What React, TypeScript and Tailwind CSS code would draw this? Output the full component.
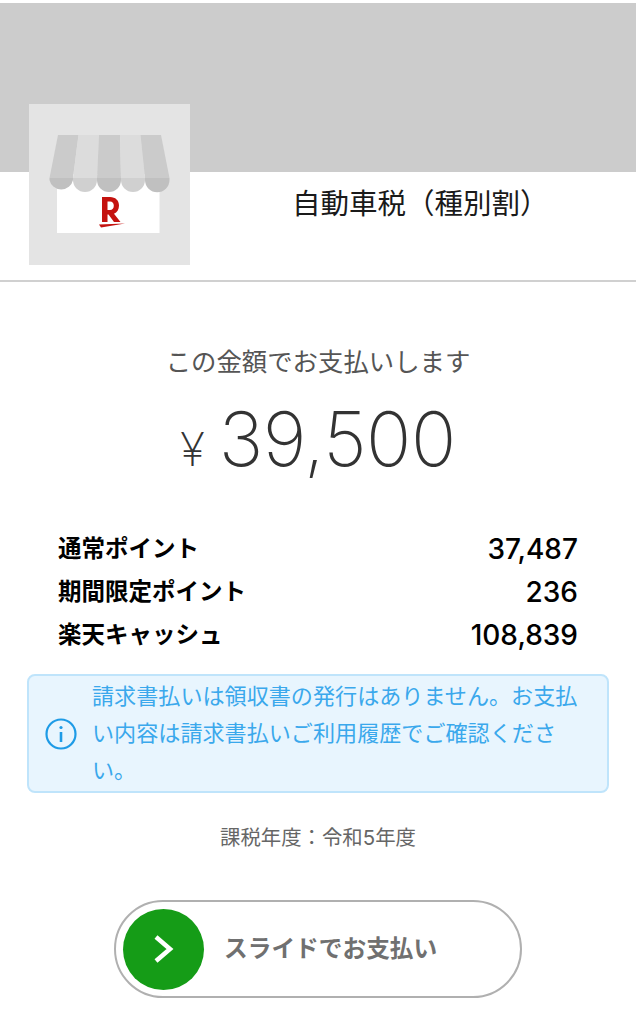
import React from 'react';

const JP = { fontFamily: 'Inter, "Noto Sans CJK JP", sans-serif' };

const points = [
  { label: '通常ポイント', value: '37,487' },
  { label: '期間限定ポイント', value: '236' },
  { label: '楽天キャッシュ', value: '108,839' },
];

const ShopIcon = () => (
  <svg viewBox="0 0 161 161" className="w-[161px] h-[161px] block">
    <rect x="28" y="70" width="102.5" height="59" fill="#ffffff" />
    {/* awning stripes */}
    <path d="M29 31 H49.5 L44 74 H20.5 Z" fill="#cbcbcb" />
    <path d="M49.5 31 H70 L68 74 H44 Z" fill="#dcdcdc" />
    <path d="M70 31 H91 L92 74 H68 Z" fill="#cbcbcb" />
    <path d="M91 31 H111.5 L116 74 H92 Z" fill="#dcdcdc" />
    <path d="M111.5 31 H132 L140.5 74 H116 Z" fill="#cbcbcb" />
    {/* scallops */}
    <path d="M20.5 74 H44 V76 A12 12 0 0 1 20.5 76 Z" fill="#c0c0c0" />
    <path d="M44 74 H68 V76 A12 12 0 0 1 44 76 Z" fill="#d0d0d0" />
    <path d="M68 74 H92 V76 A12 12 0 0 1 68 76 Z" fill="#c0c0c0" />
    <path d="M92 74 H116 V76 A12 12 0 0 1 92 76 Z" fill="#d0d0d0" />
    <path d="M116 74 H140.5 V76 A12 12 0 0 1 116 76 Z" fill="#c0c0c0" />
    {/* logo */}
    <path
      fill="#c4120f"
      fillRule="evenodd"
      d="M73 93 H81 C86.5 93 90 96.5 90 101.5 C90 105.5 88 108.5 85 109.8 L91.5 118 H85 L79.5 110.5 H78.5 V118 H73 Z M78.5 97.5 V106 H81 C83.5 106 84.8 104.2 84.8 101.8 C84.8 99.4 83.5 97.5 81 97.5 Z"
    />
    <path d="M70 120.5 L96 119.5 L72 123.5 Z" fill="#c4120f" />
  </svg>
);

const App = () => {
  return (
    <div className="w-[636px] h-[1024px] bg-white overflow-hidden pt-[3px]" style={JP}>
      <header className="border-b-2 border-[#d0d0d0]">
        <div className="h-[169px] bg-[#cccccc]" />
        <div className="flex h-[108px] pl-[29px]">
          <div className="w-[161px] h-[161px] -mt-[68px] bg-[#e4e4e4] shrink-0 relative">
            <ShopIcon />
          </div>
          <div className="flex-1 pl-[102px] pt-[13px] text-[28.5px] leading-[38px] text-[#1a1a1a] font-normal whitespace-nowrap">
            自動車税（種別割）
          </div>
        </div>
      </header>

      <p className="mt-[62px] text-center text-[25.4px] leading-[36px] font-normal text-[#555555]">この金額でお支払いします</p>

      <div className="mt-[17px] flex items-baseline justify-center text-[#333333] h-[84px]">
        <span className="text-[46px] leading-[84px] font-extralight mr-[14px]">¥</span>
        <span className="text-[75px] leading-[84px] font-extralight tracking-[-0.5px]">39,500</span>
      </div>

      <div className="mt-[50px] px-[58px] flex flex-col gap-[7px]">
        {points.map(p => (
          <div key={p.label} className="flex justify-between items-center h-[36px] text-black">
            <span className="text-[23.5px] font-semibold">{p.label}</span>
            <span className="text-[28px] font-medium">{p.value}</span>
          </div>
        ))}
      </div>

      <div className="mt-[21px] mx-[27px] h-[119px] flex items-center bg-[#e8f5fe] border-2 border-[#bfe4fb] rounded-[8px] pl-[16px] pr-[24px] gap-[15px]">
        <svg viewBox="0 0 32 32" className="w-[32px] h-[32px] shrink-0" fill="none" stroke="#1e9be6" strokeWidth="2.2">
          <circle cx="16" cy="16" r="14.5" />
          <path d="M16 14 V24" strokeWidth="2.6" />
          <circle cx="16" cy="9.5" r="1.6" fill="#1e9be6" stroke="none" />
        </svg>
        <p className="text-[22.1px] leading-[37px] text-[#3aa8ec] font-normal">
          請求書払いは領収書の発行はありません。お支払い内容は請求書払いご利用履歴でご確認ください。
        </p>
      </div>

      <p className="mt-[30px] text-center text-[20.4px] leading-[30px] font-normal text-[#666666]">課税年度：令和5年度</p>

      <div className="mt-[47px] mx-auto w-[408px] h-[98px] rounded-full border-2 border-[#b0b0b0] flex items-center pl-[7px]">
        <div className="w-[81px] h-[81px] rounded-full bg-[#159c17] flex items-center justify-center shrink-0">
          <svg viewBox="0 0 20 28" className="w-[20px] h-[28px]" fill="none" stroke="#ffffff" strokeWidth="4.5">
            <path d="M2 2 L16 14 L2 26" />
          </svg>
        </div>
        <span className="ml-[20px] text-[23.7px] font-semibold text-[#707070]">スライドでお支払い</span>
      </div>
    </div>
  );
};

export default App;
